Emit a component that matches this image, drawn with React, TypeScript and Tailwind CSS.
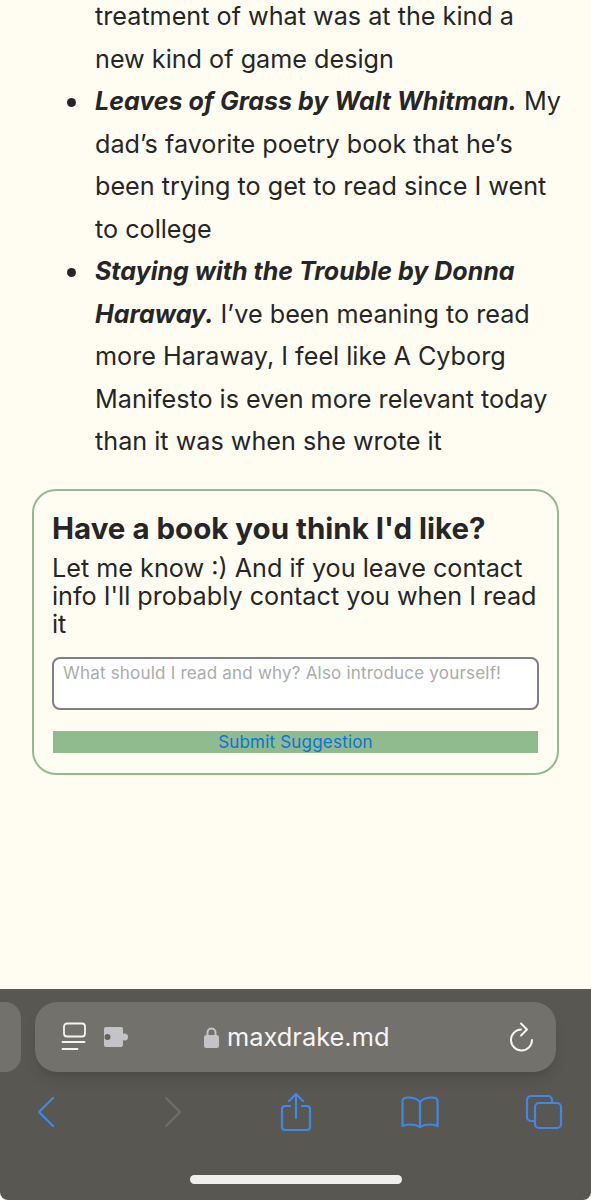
const sans = '[font-family:Inter,"Liberation_Sans",sans-serif]'

function BackIcon() {
  return (
    <svg width="20" height="32" viewBox="0 0 20 32" fill="none" stroke="#4287e6" strokeWidth="2.4" strokeLinecap="round" strokeLinejoin="round">
      <path d="M17 2 3 16 17 30" />
    </svg>
  )
}

function ForwardIcon() {
  return (
    <svg width="20" height="32" viewBox="0 0 20 32" fill="none" stroke="#6e6e6a" strokeWidth="2.4" strokeLinecap="round" strokeLinejoin="round">
      <path d="M3 2 17 16 3 30" />
    </svg>
  )
}

function ShareIcon() {
  return (
    <svg width="32" height="40" viewBox="0 0 32 40" fill="none" stroke="#4287e6" strokeWidth="2.2" strokeLinecap="round" strokeLinejoin="round">
      <path d="M10 14H5a3 3 0 0 0-3 3v18a3 3 0 0 0 3 3h22a3 3 0 0 0 3-3V17a3 3 0 0 0-3-3h-5" />
      <path d="M16 26V2M9 9l7-7 7 7" />
    </svg>
  )
}

function BookIcon() {
  return (
    <svg width="38" height="32" viewBox="0 0 38 32" fill="none" stroke="#4287e6" strokeWidth="2.2" strokeLinecap="round" strokeLinejoin="round">
      <path d="M19 6C16 2.500 12 1.500 7 1.500 4.500 1.500 1.500 2 1.500 5v25c4-1.800 12-2.500 17.500 1 5.500-3.500 13.500-2.800 17.500-1V5c0-3-3-3.500-5.500-3.500C26 1.500 22 2.500 19 6Z" />
      <path d="M19 6v24" />
    </svg>
  )
}

function TabsIcon() {
  return (
    <svg width="38" height="36" viewBox="0 0 38 36" fill="none" stroke="#4287e6" strokeWidth="2.2" strokeLinejoin="round" strokeLinecap="round">
      <path d="M27 9V6a4 4 0 0 0-4-4H6a4 4 0 0 0-4 4v17a4 4 0 0 0 4 4h3" />
      <rect x="10" y="9" width="26" height="25" rx="4" />
    </svg>
  )
}

function ReaderIcon() {
  return (
    <svg width="26" height="30" viewBox="0 0 26 30" fill="none" stroke="#f4f4f2" strokeLinecap="round">
      <rect x="3" y="1.500" width="21" height="13" rx="3" strokeWidth="1.800" />
      <path d="M1.500 20h22M1.500 27h15" strokeWidth="1.800" />
    </svg>
  )
}

function PuzzleIcon() {
  return (
    <svg width="26" height="22" viewBox="0 0 26 22" fill="#c4c3c8">
      <rect x="1" y="1" width="19" height="20" rx="2" />
      <circle cx="21.500" cy="11" r="3.500" />
      <circle cx="4.500" cy="11" r="3" fill="#63625d" />
    </svg>
  )
}

function LockIcon() {
  return (
    <svg width="15" height="21" viewBox="0 0 15 21" fill="#c4c3c8">
      <path d="M2.500 9V5.500a5 5 0 0 1 10 0V9h-2V5.500a3 3 0 0 0-6 0V9Z" />
      <rect x="0" y="8" width="15" height="13" rx="2.500" />
    </svg>
  )
}

function ReloadIcon() {
  return (
    <svg width="26" height="30" viewBox="0 0 26 30" fill="none" stroke="#f6f6f4" strokeWidth="2" strokeLinecap="round" strokeLinejoin="round">
      <path d="M12 7.500A10.500 10.500 0 1 0 23 18" />
      <path d="M12 1.500l6 6-6 6" />
    </svg>
  )
}

function Bullet() {
  return <span className="absolute -left-[28px] top-[18px] h-[9px] w-[9px] rounded-full bg-[#262626]" />
}

export default function App() {
  return (
    <div className={`flex h-[1200px] w-[591px] flex-col overflow-hidden rounded-b-[8px] bg-[#fffdf2] text-[#262626] ${sans}`}>
      <ul className="-mt-[5px] list-none pl-[95px] pr-[28px] text-[25.2px] leading-[42.5px]">
        <li>treatment of what was at the kind a new kind of game design</li>
        <li className="relative">
          <Bullet />
          <strong className="text-[25px] font-bold italic">Leaves of Grass by Walt Whitman.</strong> My dad’s favorite poetry book that he’s been trying to get to read since I went to college
        </li>
        <li className="relative">
          <Bullet />
          <strong className="text-[25px] font-bold italic">Staying with the Trouble by Donna Haraway.</strong> I’ve been meaning to read more Haraway, I feel like A Cyborg Manifesto is even more relevant today than it was when she wrote it
        </li>
      </ul>

      <section className="mx-[32px] mt-[26px] h-[286px] rounded-[24px] border-2 border-[#92ba92] px-[18px] pt-[21px]">
        <h2 className="text-[29.5px] font-bold leading-[32px]">Have a book you think I'd like?</h2>
        <p className="mt-[10px] text-[25.2px] leading-[28px]">
          Let me know :) And if you leave contact info I'll probably contact you when I read it
        </p>
        <textarea
          placeholder="What should I read and why? Also introduce yourself!"
          className="mt-[19px] block h-[53px] w-[487px] resize-none rounded-[8px] border-2 border-[#7f7f88] bg-white px-[9px] py-[3px] text-[17px] leading-[22px] tracking-[0.2px] placeholder:text-[#ababab]"
        />
        <button
          type="button"
          className="ml-[1px] mt-[21px] block h-[22px] w-[485px] bg-[#8fbb8e] text-center text-[17px] leading-[22px] tracking-[0.2px] text-[#0a74da]"
        >
          Submit Suggestion
        </button>
      </section>

      <div className="mt-auto flex h-[211px] flex-col bg-[#585751]">
        <div className="mt-[13px] flex h-[70px] gap-[14px]">
          <div className="w-[21px] rounded-r-[16px] bg-[#72716b]" />
          <div className="flex w-[521px] items-center rounded-[22px] bg-[#72716b] pl-[26px] pr-[21px] shadow-lg">
            <ReaderIcon />
            <div className="ml-[16px]"><PuzzleIcon /></div>
            <div className="ml-[75px] flex items-center gap-[8px]">
              <LockIcon />
              <span className="text-[25.4px] leading-[32px] text-[#f6f6f4]">maxdrake.md</span>
            </div>
            <div className="ml-auto"><ReloadIcon /></div>
          </div>
        </div>
        <div className="mt-[20px] flex h-[40px] items-center pl-[36px]">
          <BackIcon />
          <div className="ml-[107px]"><ForwardIcon /></div>
          <div className="ml-[97px]"><ShareIcon /></div>
          <div className="ml-[89px]"><BookIcon /></div>
          <div className="ml-[86px]"><TabsIcon /></div>
        </div>
        <div className="mx-auto mt-[43px] h-[9px] w-[212px] rounded-full bg-[#f0eff0]" />
      </div>
    </div>
  )
}
